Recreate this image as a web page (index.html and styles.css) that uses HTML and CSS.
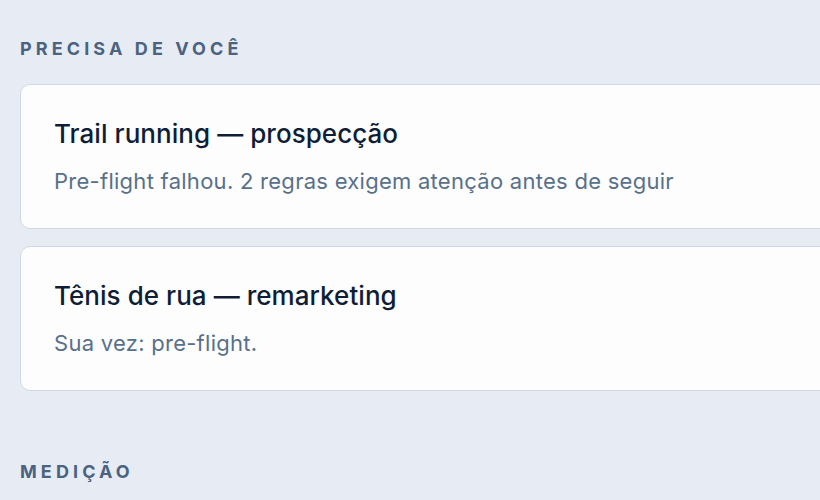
FILE: index.html
```html
<!DOCTYPE html>
<html lang="pt-BR">
<head>
<meta charset="utf-8">
<link rel="stylesheet" href="styles.css">
</head>
<body>
<main class="page">
  <section class="section">
    <h2 class="section-label">Precisa de você</h2>
    <div class="cards">
      <article class="card">
        <h3 class="card-title">Trail running — prospecção</h3>
        <p class="card-sub">Pre-flight falhou. 2 regras exigem atenção antes de seguir</p>
      </article>
      <article class="card">
        <h3 class="card-title">Tênis de rua — remarketing</h3>
        <p class="card-sub">Sua vez: pre-flight.</p>
      </article>
    </div>
  </section>
  <section class="section">
    <h2 class="section-label">Medição</h2>
  </section>
</main>
</body>
</html>
```
FILE: styles.css
```css
html, body {
  margin: 0;
  padding: 0;
  background: #e7ecf4;
  overflow: hidden;
  height: 100%;
}
body {
  font-family: "Inter", "Noto Sans", sans-serif;
  -webkit-font-smoothing: antialiased;
}
.page {
  padding: 37px 0 0 20px;
  width: 840px;
  display: flex;
  flex-direction: column;
  gap: 69px;
}
.section-label {
  margin: 0 0 23px 0;
  font-size: 18px;
  font-weight: 700;
  letter-spacing: 4.1px;
  text-transform: uppercase;
  color: #4b6280;
  line-height: 24px;
}
.cards {
  display: flex;
  flex-direction: column;
  gap: 17px;
}
.card {
  background: #fdfdfe;
  border: 1.5px solid #cfd9e5;
  border-radius: 10px;
  padding: 33px 33px 0 33px;
  height: 145px;
  box-sizing: border-box;
}
.card-title {
  margin: 0;
  font-size: 26px;
  font-weight: 500;
  letter-spacing: 0.05px;
  color: #0f1d36;
  line-height: 32px;
}
.card-sub {
  margin: 17px 0 0 0;
  font-size: 22px;
  font-weight: 400;
  letter-spacing: 0.27px;
  color: #587089;
  line-height: 28px;
}
```
